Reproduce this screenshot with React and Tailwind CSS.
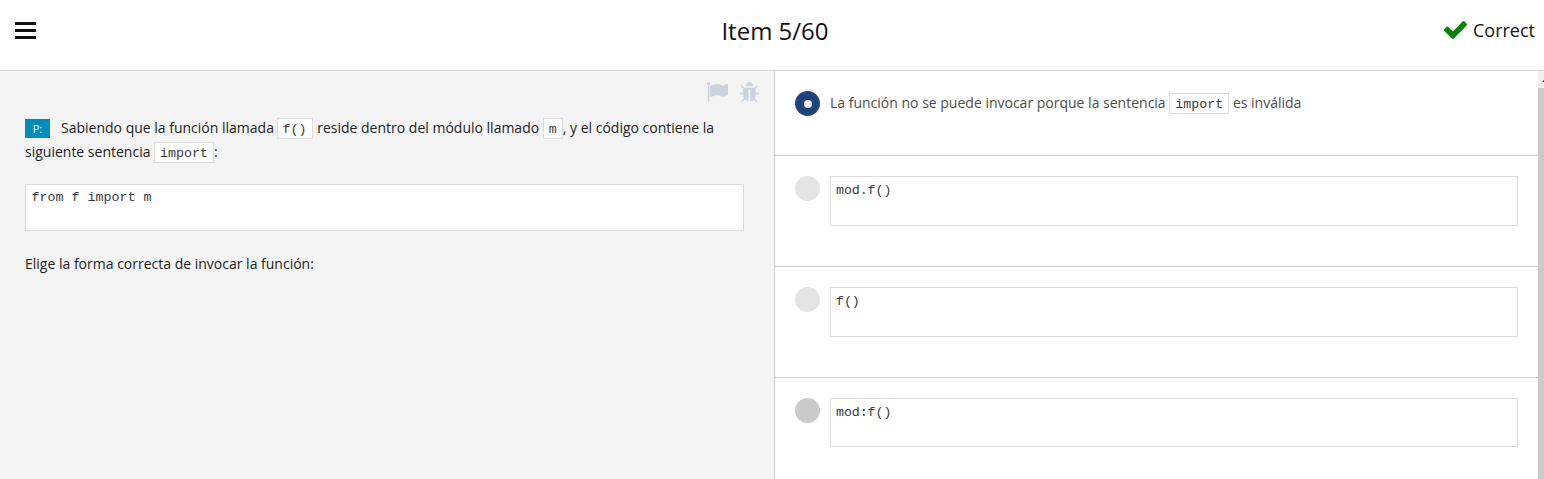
function Code({ children, className = '' }) {
  return (
    <code className={`-mt-px mb-px inline-block h-[21px] border border-[#dcdcdc] bg-white px-[5px] align-middle font-['Liberation_Mono',monospace] text-[13.333px] leading-[21px] text-[#3a3a3a] ${className}`}>
      {children}
    </code>
  );
}

function CodeBlock({ children, className = '' }) {
  return (
    <pre className={`border border-[#dcdcdc] bg-white font-['Liberation_Mono',monospace] text-[13.333px] leading-[18px] text-[#3a3a3a] ${className}`}>
      {children}
    </pre>
  );
}

function Flag() {
  return (
    <svg className="h-[20px] w-[21px]" viewBox="64 128 1728 1536" preserveAspectRatio="none" fill="currentColor">
      <path d="M320 256q0 72-64 110v1266q0 13-9.5 22.5t-22.5 9.5h-64q-13 0-22.5-9.5t-9.5-22.5v-1266q-64-38-64-110 0-53 37.5-90.5t90.5-37.5 90.5 37.5 37.5 90.5zm1472 64v763q0 25-12.5 38.5t-39.5 27.5q-215 116-369 116-61 0-123.5-22t-108.5-48-115.5-48-142.5-22q-192 0-464 146-17 9-33 9-26 0-45-19t-19-45v-742q0-32 31-55 21-14 79-43 236-120 421-120 107 0 200 29t219 88q38 19 88 19 54 0 117.5-21t110-47 88-47 54.5-21q26 0 45 19t19 45z" />
    </svg>
  );
}

function Bug() {
  return (
    <svg className="h-[20px] w-[20px]" viewBox="32 64 1664 1534" preserveAspectRatio="none" fill="currentColor">
      <path d="M1696 960q0 26-19 45t-45 19h-224q0 171-67 290l208 209q19 19 19 45t-19 45q-18 19-45 19t-45-19l-198-197q-5 5-15 13t-42 28.5-65 36.5-82 29-97 13v-896h-128v896q-51 0-101.5-13.5t-87-33-66-39-43.5-32.5l-15-14-183 207q-20 21-48 21-24 0-43-16-19-18-20.5-44.5t15.5-46.5l202-227q-58-114-58-274h-224q-26 0-45-19t-19-45 19-45 45-19h224v-294l-173-173q-19-19-19-45t19-45 45-19 45 19l173 173h844l173-173q19-19 45-19t45 19 19 45-19 45l-173 173v294h224q26 0 45 19t19 45zm-480-576h-640q0-133 93.5-226.5t226.5-93.5 226.5 93.5 93.5 226.5z" />
    </svg>
  );
}

function Check() {
  return (
    <svg className="h-[18px] w-[23px]" viewBox="121 334 1550 1188" preserveAspectRatio="none" fill="currentColor">
      <path d="M1671 566q0 40-28 68l-724 724-136 136q-28 28-68 28t-68-28l-136-136-362-362q-28-28-28-68t28-68l136-136q28-28 68-28t68 28l294 295 656-657q28-28 68-28t68 28l136 136q28 28 28 68z" />
    </svg>
  );
}

const options = [
  { code: 'mod.f()', dot: 'bg-[#e4e4e4]', box: 'h-[50px]' },
  { code: 'f()', dot: 'bg-[#e4e4e4]', box: 'h-[50px]' },
  { code: 'mod:f()', dot: 'bg-[#cacaca]', box: 'h-[49px]' },
];

export default function App() {
  return (
    <div className="flex h-[479px] w-[1544px] flex-col overflow-hidden bg-white font-['Open_Sans',sans-serif] text-[14px] text-[#222]">
      <header className="grid h-[71px] shrink-0 grid-cols-3 border-b border-[#d2d2d2] text-[#111]">
        <button aria-label="Menu" className="ml-[15px] mt-[22px] flex h-[17px] w-[21px] flex-col justify-between">
          <span className="h-[3px] w-full bg-[#111]" />
          <span className="h-[3px] w-full bg-[#111]" />
          <span className="h-[3px] w-full bg-[#111]" />
        </button>
        <h1 className="pl-[6px] pt-[13px] text-center text-[24px] leading-[36px]">Item 5/60</h1>
        <div className="flex items-start justify-end pr-[9px]">
          <span className="mr-[5.5px] mt-[21px] text-[#078407]"><Check /></span>
          <span className="mt-[17px] text-[18px] leading-[27px]">Correct</span>
        </div>
      </header>
      <main className="flex min-h-0 flex-1">
        <section className="w-[775px] shrink-0 border-r border-[#cfcfcf] bg-[#f4f4f4] pl-[25px] pr-[30px]">
          <div className="-mr-[14.5px] flex h-[45px] justify-end gap-[11px] pt-[11px] text-[#ccd3de]">
            <Flag />
            <Bug />
          </div>
          <p className="leading-[24px]">
            <span className="-mt-px mb-px mr-[11px] inline-block h-[19px] w-[25px] bg-[#008cba] text-center align-middle text-[11px] leading-[20px] text-white">P:</span>
            Sabiendo que la función llamada <Code className="-ml-px mr-px">f()</Code> reside dentro del módulo llamado <Code>m</Code>, y el código contiene la siguiente sentencia <Code>import</Code>:
          </p>
          <CodeBlock className="mt-[20px] h-[47px] pl-[5.5px] pt-[4px]">from f import m</CodeBlock>
          <p className="mt-[21px] leading-[24px]">Elige la forma correcta de invocar la función:</p>
        </section>
        <section className="min-w-0 flex-1 overflow-hidden">
          <div className="flex h-[85px] border-b border-[#d2d2d2] pl-[20px] pt-[20px] text-[#4d4d4d]">
            <span className="mr-[10px] flex size-[25px] items-center justify-center rounded-full bg-[#214478]">
              <span className="size-[8px] rounded-full bg-white" />
            </span>
            <p className="leading-[24px]">
              La función no se puede invocar porque la sentencia <Code>import</Code> es inválida
            </p>
          </div>
          {options.map((o) => (
            <div key={o.code} className="flex h-[111px] items-start border-b border-[#d2d2d2] pl-[20px] pr-[20px] pt-[20px]">
              <span className={`mr-[10px] size-[25px] shrink-0 rounded-full ${o.dot}`} />
              <CodeBlock className={`flex-1 pl-[5px] pt-[5px] tracking-[-0.1px] ${o.box}`}>{o.code}</CodeBlock>
            </div>
          ))}
        </section>
        <div className="flex w-[6px] shrink-0 flex-col overflow-hidden bg-[#f1f1f1]">
          <div className="flex h-[17px] shrink-0 items-center">
            <svg className="ml-[4px] h-[4px] w-[7px] shrink-0" viewBox="0 0 7 4"><path d="M0 4L3.5 0L7 4Z" fill="#505050" /></svg>
          </div>
          <div className="flex-1 bg-[#cacaca]" />
        </div>
      </main>
    </div>
  );
}
